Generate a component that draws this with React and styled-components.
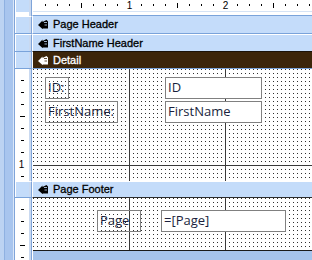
import React from 'react';
import styled, { createGlobalStyle } from 'styled-components';

const Global = createGlobalStyle`
  *, *::before, *::after { box-sizing: border-box; }
  html, body { margin: 0; padding: 0; background: #fff; overflow: hidden; }
  body { width: 312px; height: 260px; font-family: "Liberation Sans", Arial, sans-serif; }
`;

const Frame = styled.div`
  display: flex;
  width: 312px;
  height: 260px;
  overflow: hidden;
`;

const LeftStrip = styled.div`
  width: 15px;
  flex: none;
  background: linear-gradient(
    to right,
    #bcd3f2 0 4px,
    #8fb1e1 4px 5px,
    #a8c5ee 5px 13px,
    #dbe7f8 13px 14px,
    #7fa4d9 14px 15px
  );
`;

const Designer = styled.div`
  flex: 1;
  min-width: 0;
  display: flex;
  flex-direction: column;
`;

const Row = styled.div`
  display: flex;
  flex: ${p => (p.$h ? 'none' : '1')};
  height: ${p => (p.$h ? `${p.$h}px` : 'auto')};
`;

const SideCell = styled.div`
  width: 17px;
  flex: none;
  background: #fff;
  border-right: 1px solid #7fa4d9;
  box-shadow: inset -2px 0 #c9d9f0;
`;

const Corner = styled(SideCell)`
  background: linear-gradient(to bottom, #c4dcfa 0 12px, #fff 12px);
  box-shadow: inset -2px 0 #c9d9f0, inset 1px 0 #fff;
`;

const Selector = styled(SideCell)`
  background: #c4dcfa;
  border-top: ${p => (p.$top ? `1px solid ${p.$top}` : 'none')};
  border-bottom: ${p => (p.$bottom ? `1px solid ${p.$bottom}` : 'none')};
  box-shadow: inset -2px 0 #c9d9f0, inset 1px 0 #fff;
`;

const MainCell = styled.div`
  flex: 1;
  min-width: 0;
  border-left: 1px solid #fff;
  display: flex;
  flex-direction: column;
`;

const TopRulerCell = styled(MainCell)`
  background: #fff;
  border-bottom: 1px solid #7aa3da;
  box-shadow: inset 0 -3px #fff, inset 0 -4px #d5e3f5;
`;

const Bar = styled(MainCell)`
  flex-direction: row;
  align-items: center;
  gap: 5px;
  padding-left: 5px;
  background: ${p => (p.$dark ? '#3c250a' : '#c4dcfa')};
  color: ${p => (p.$dark ? '#ffffff' : '#000000')};
  border-top: ${p => (p.$top ? `1px solid ${p.$top}` : 'none')};
  border-bottom: ${p => (p.$bottom ? `1px solid ${p.$bottom}` : 'none')};
  font-size: 11px;
  white-space: nowrap;
`;

const BarTitle = styled.span`
  line-height: 13px;
  -webkit-text-stroke: 0.3px currentColor;
`;

const Canvas = styled.div`
  position: relative;
  flex: none;
  height: ${p => p.$h}px;
  background-color: #fff;
  background-image:
    linear-gradient(to bottom, transparent 96px, #3a3a3a 96px 97px, transparent 97px),
    linear-gradient(
      to right,
      transparent 96px,
      #3a3a3a 96px 97px,
      transparent 97px 192px,
      #3a3a3a 192px 193px,
      transparent 193px
    ),
    linear-gradient(to right, #fff 3px, transparent 3px),
    linear-gradient(to bottom, #fff 3px, #303030 3px);
  background-size: 100% 100%, 100% 100%, 4px 4px, 4px 4px;
  background-repeat: no-repeat, no-repeat, repeat, repeat;
  background-position: 0 0, 0 0, 1px 1px, 1px 1px;
`;

const BottomArea = styled.div`
  flex: 1;
  background: #a6c4ec;
  border-top: 1px solid #1b1b1b;
`;

const Control = styled.div`
  position: absolute;
  left: ${p => p.$x}px;
  top: ${p => p.$y}px;
  width: ${p => p.$w}px;
  height: 22px;
  border: 1px solid #808080;
  padding-left: 2px;
  font-family: "Open Sans", "Liberation Sans", sans-serif;
  font-size: 13px;
  line-height: 19px;
  color: #1a1f3d;
  white-space: nowrap;
  overflow: hidden;
`;

const Label = styled(Control)`
  background: transparent;
`;

const TextBox = styled(Control)`
  background: #fff;
`;

function SectionIcon({ color }) {
  return (
    <svg width="10" height="9" viewBox="0 0 10 9" style={{ flex: 'none' }}>
      <path d="M0 5 L4.5 0.5 L4.5 2 L8.5 0 L10 1.5 L10 8.5 L5 8.5 L4.5 9 Z" fill={color} />
      <path d="M6 2.5 L9 2.5 M6.5 5 L9 5" stroke={color === '#fff' ? '#3c250a' : '#c4dcfa'} strokeWidth="0.8" />
    </svg>
  );
}

function TopRuler() {
  const marks = [];
  for (let k = 1; k <= 23; k++) {
    const x = 12 * k;
    if (k % 8 === 0) {
      marks.push(
        <text key={k} x={x + 0.5} y={9} fontSize="10" textAnchor="middle" fill="#000"
          fontFamily="Liberation Sans, Arial, sans-serif">{k / 8}</text>
      );
    } else if (k % 4 === 0) {
      marks.push(<rect key={k} x={x} y={3} width={1} height={5} fill="#000" />);
    } else {
      marks.push(<rect key={k} x={x} y={4} width={1} height={2} fill="#000" />);
    }
  }
  return (
    <svg width="279" height="11" viewBox="0 0 279 11" style={{ display: 'block' }}>
      {marks}
    </svg>
  );
}

function SideRuler({ height, ticks }) {
  return (
    <svg width="14" height={height} viewBox={`0 0 14 ${height}`} style={{ display: 'block' }}>
      {ticks.map(t =>
        t.label ? (
          <text key={t.y} x={6.5} y={t.y + 4} fontSize="10" textAnchor="middle" fill="#000"
            fontFamily="Liberation Sans, Arial, sans-serif">{t.label}</text>
        ) : (
          <rect key={t.y} x={t.tall ? 5 : 6} y={t.y} width={t.tall ? 5 : 3} height={1} fill="#000" />
        )
      )}
    </svg>
  );
}

const detailTicks = Array.from({ length: 9 }, (_, i) => {
  const k = i + 1;
  return { y: 12 * k - 1, tall: k === 4, label: k === 8 ? '1' : null };
});

const footerTicks = [11, 23, 35, 47, 59].map((y, i) => ({ y, tall: i === 3 }));

function SectionRow({ h, title, dark, top, bottom, selTop, selBottom }) {
  return (
    <Row $h={h}>
      <Selector $top={selTop} $bottom={selBottom} />
      <Bar $dark={dark} $top={top} $bottom={bottom}>
        <SectionIcon color={dark ? '#fff' : '#000'} />
        <BarTitle>{title}</BarTitle>
      </Bar>
    </Row>
  );
}

export default function App() {
  return (
    <>
      <Global />
      <Frame>
        <LeftStrip />
        <Designer>
          <Row $h={16}>
            <Corner />
            <TopRulerCell>
              <TopRuler />
            </TopRulerCell>
          </Row>
          <SectionRow h={18} title="Page Header" bottom="#7aa3da" selTop="#fff" selBottom="#7aa3da" />
          <SectionRow h={17} title="FirstName Header" top="#fff" selTop="#fff" />
          <SectionRow h={18} title="Detail" dark top="#1c1309" bottom="#7aa3da" selTop="#7aa3da" selBottom="#7aa3da" />
          <Row $h={112}>
            <SideCell>
              <SideRuler height={112} ticks={detailTicks} />
            </SideCell>
            <MainCell>
              <Canvas $h={112}>
                <Label $x={12} $y={8} $w={24}>ID:</Label>
                <TextBox $x={132} $y={8} $w={97}>ID</TextBox>
                <Label $x={12} $y={32} $w={73}>FirstName:</Label>
                <TextBox $x={132} $y={32} $w={97}>FirstName</TextBox>
              </Canvas>
            </MainCell>
          </Row>
          <SectionRow h={17} title="Page Footer" top="#fff" bottom="#2c2c2c" selTop="#fff" selBottom="#7aa3da" />
          <Row>
            <SideCell>
              <SideRuler height={62} ticks={footerTicks} />
            </SideCell>
            <MainCell>
              <Canvas $h={52}>
                <Label $x={64} $y={12} $w={44}>Page</Label>
                <TextBox $x={128} $y={12} $w={125}>=[Page]</TextBox>
              </Canvas>
              <BottomArea />
            </MainCell>
          </Row>
        </Designer>
      </Frame>
    </>
  );
}
